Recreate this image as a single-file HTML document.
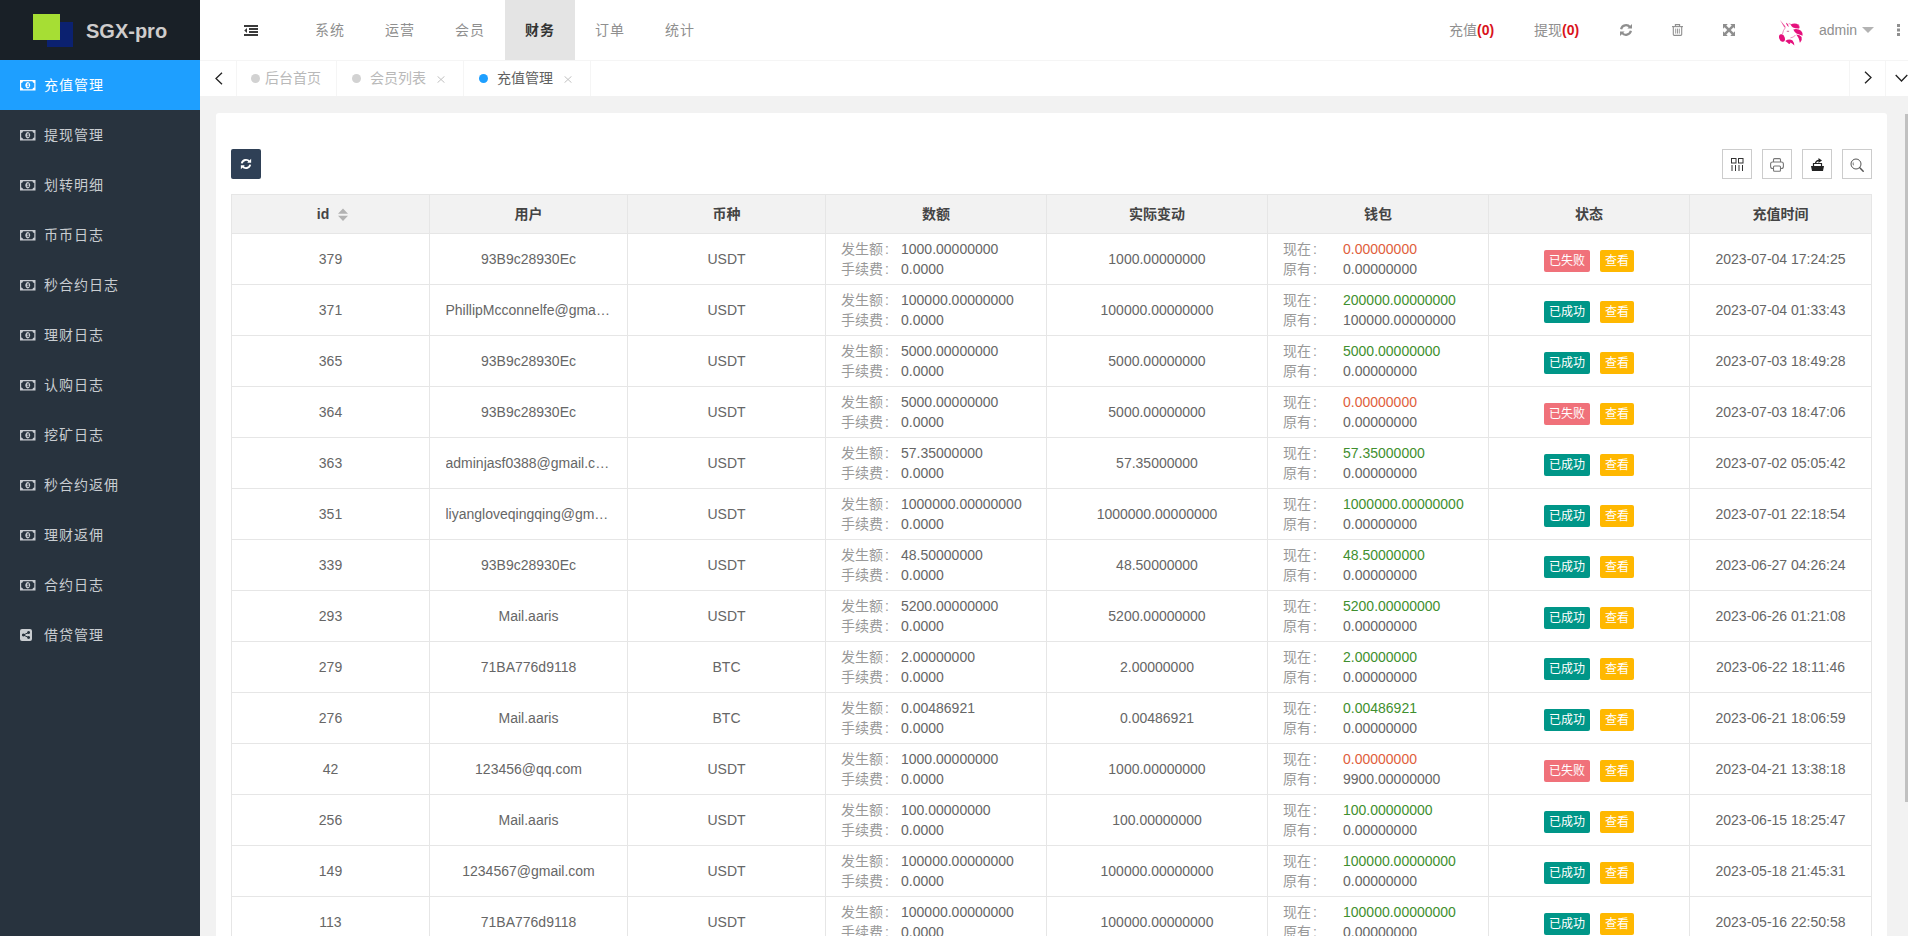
<!DOCTYPE html>
<html lang="zh-CN">
<head>
<meta charset="utf-8">
<title>SGX-pro</title>
<style>
*{box-sizing:border-box;margin:0;padding:0}
html,body{width:1908px;height:936px;overflow:hidden;background:#f2f2f2}
body{font-family:"Liberation Sans","Noto Sans CJK SC",sans-serif;font-size:14px;color:#666;position:relative}
svg{display:block}
.abs{position:absolute}
/* sidebar */
#side{position:absolute;left:0;top:0;width:200px;height:936px;background:#28333e}
#logo{position:absolute;left:0;top:0;width:200px;height:60px;background:#192027}
#logo .g{position:absolute;left:33px;top:14px;width:27px;height:26px;background:#a6de34}
#logo .b{position:absolute;left:47px;top:22px;width:26px;height:25px;background:#0b2170}
#logo h1{position:absolute;left:86px;top:1px;line-height:60px;font-size:20px;font-weight:bold;color:#cfcccc;white-space:nowrap}
.mi{position:absolute;left:0;width:200px;height:50px;line-height:50px;color:#c9cdd1;font-size:14px;white-space:nowrap;letter-spacing:1px}
.mi.on{background:#1e9fff;color:#fff}
.mi svg{position:absolute;left:20px;top:20px}
.mi span{position:absolute;left:44px;top:0}
/* header */
#head{position:absolute;left:200px;top:0;width:1708px;height:60px;background:#fff}
.nv{position:absolute;top:0;height:60px;width:70px;line-height:60px;text-align:center;color:#8f8f8f;font-size:14px;letter-spacing:1px}
.nv.on{background:#e4e4e4;color:#333;font-weight:bold}
.hr{position:absolute;top:0;height:60px;line-height:60px;color:#8f8f8f;font-size:14px;white-space:nowrap}
.hr b{color:#d9141c;font-weight:bold}
/* tab bar */
#tabs{position:absolute;left:200px;top:60px;width:1708px;height:36px;background:#fff;border-top:1px solid #f5f5f5}
.tb{position:absolute;top:0;height:35px;line-height:35px;border-right:1px solid #f5f5f5;font-size:14px;color:#b9b9b9;white-space:nowrap}
.tb i{position:absolute;top:13px;width:9px;height:9px;border-radius:50%;background:#d2d2d2}
.tb.on{color:#606060}
.tb.on i{background:#1e9fff}
/* card */
#card{position:absolute;left:216px;top:113px;width:1671px;height:900px;background:#fff;border-radius:3px 3px 0 0}
#rbtn{position:absolute;left:231px;top:149px;width:30px;height:30px;background:#2f4056;border-radius:2px}
.tool{position:absolute;top:149px;width:30px;height:30px;border:1px solid #ccc;background:#fff}
/* table */
#tbl{position:absolute;left:231px;top:194px;border-collapse:collapse;table-layout:fixed;width:1640px}
#tbl th,#tbl td{border:1px solid #e6e6e6;font-size:14px;text-align:center;white-space:nowrap;overflow:hidden;text-overflow:ellipsis;padding:0}
#tbl th{height:39px;background:#f2f2f2;color:#444;font-weight:bold;padding-bottom:2px}
#tbl td{height:51px;color:#666}
#tbl td.l{text-align:left;padding-left:15px;line-height:20px}
#tbl td.l em{font-style:normal;color:#999;display:inline-block;width:60px}
.gr{color:#3f8f2f}.rd{color:#e05e3c}
.bt{position:relative;top:2px;display:inline-block;height:22px;line-height:22px;padding:0 5px;font-size:12px;color:#fff;border-radius:2px;vertical-align:middle}
.bt+.bt{margin-left:10px}
.ok{background:#009688}.fail{background:#f0717a}.see{background:#ffb800}
#sb{position:absolute;left:1905px;top:114px;width:3px;height:688px;background:#c1c1c1}
#tbl td .u{width:166px;margin:0 auto;overflow:hidden;text-overflow:ellipsis;white-space:nowrap}
#tbl td.l em i{font-style:normal;margin-left:2px}
</style>
</head>
<body>
<div id="side">
 <div id="logo"><div class="b"></div><div class="g"></div><h1>SGX-pro</h1></div>
 <div class="mi on" style="top:60px"><svg width="15.5" height="10.5" viewBox="0 0 15.5 10.5"><path fill="currentColor" fill-rule="evenodd" d="M0 0H15.5V10.5H0Z M3 1.2H12.5A1.8 1.8 0 0 0 14.3 3V7.5A1.8 1.8 0 0 0 12.5 9.3H3A1.8 1.8 0 0 0 1.2 7.5V3A1.8 1.8 0 0 0 3 1.2Z M7.75 2.1a2.4 3.15 0 1 0 .001 0Z M7.1 3.9l.9-.6h.6v3.1h.7v.7H6.8v-.7h.8V4.4l-.5.3Z"/></svg><span>充值管理</span></div>
 <div class="mi" style="top:110px"><svg width="15.5" height="10.5" viewBox="0 0 15.5 10.5"><path fill="currentColor" fill-rule="evenodd" d="M0 0H15.5V10.5H0Z M3 1.2H12.5A1.8 1.8 0 0 0 14.3 3V7.5A1.8 1.8 0 0 0 12.5 9.3H3A1.8 1.8 0 0 0 1.2 7.5V3A1.8 1.8 0 0 0 3 1.2Z M7.75 2.1a2.4 3.15 0 1 0 .001 0Z M7.1 3.9l.9-.6h.6v3.1h.7v.7H6.8v-.7h.8V4.4l-.5.3Z"/></svg><span>提现管理</span></div>
 <div class="mi" style="top:160px"><svg width="15.5" height="10.5" viewBox="0 0 15.5 10.5"><path fill="currentColor" fill-rule="evenodd" d="M0 0H15.5V10.5H0Z M3 1.2H12.5A1.8 1.8 0 0 0 14.3 3V7.5A1.8 1.8 0 0 0 12.5 9.3H3A1.8 1.8 0 0 0 1.2 7.5V3A1.8 1.8 0 0 0 3 1.2Z M7.75 2.1a2.4 3.15 0 1 0 .001 0Z M7.1 3.9l.9-.6h.6v3.1h.7v.7H6.8v-.7h.8V4.4l-.5.3Z"/></svg><span>划转明细</span></div>
 <div class="mi" style="top:210px"><svg width="15.5" height="10.5" viewBox="0 0 15.5 10.5"><path fill="currentColor" fill-rule="evenodd" d="M0 0H15.5V10.5H0Z M3 1.2H12.5A1.8 1.8 0 0 0 14.3 3V7.5A1.8 1.8 0 0 0 12.5 9.3H3A1.8 1.8 0 0 0 1.2 7.5V3A1.8 1.8 0 0 0 3 1.2Z M7.75 2.1a2.4 3.15 0 1 0 .001 0Z M7.1 3.9l.9-.6h.6v3.1h.7v.7H6.8v-.7h.8V4.4l-.5.3Z"/></svg><span>币币日志</span></div>
 <div class="mi" style="top:260px"><svg width="15.5" height="10.5" viewBox="0 0 15.5 10.5"><path fill="currentColor" fill-rule="evenodd" d="M0 0H15.5V10.5H0Z M3 1.2H12.5A1.8 1.8 0 0 0 14.3 3V7.5A1.8 1.8 0 0 0 12.5 9.3H3A1.8 1.8 0 0 0 1.2 7.5V3A1.8 1.8 0 0 0 3 1.2Z M7.75 2.1a2.4 3.15 0 1 0 .001 0Z M7.1 3.9l.9-.6h.6v3.1h.7v.7H6.8v-.7h.8V4.4l-.5.3Z"/></svg><span>秒合约日志</span></div>
 <div class="mi" style="top:310px"><svg width="15.5" height="10.5" viewBox="0 0 15.5 10.5"><path fill="currentColor" fill-rule="evenodd" d="M0 0H15.5V10.5H0Z M3 1.2H12.5A1.8 1.8 0 0 0 14.3 3V7.5A1.8 1.8 0 0 0 12.5 9.3H3A1.8 1.8 0 0 0 1.2 7.5V3A1.8 1.8 0 0 0 3 1.2Z M7.75 2.1a2.4 3.15 0 1 0 .001 0Z M7.1 3.9l.9-.6h.6v3.1h.7v.7H6.8v-.7h.8V4.4l-.5.3Z"/></svg><span>理财日志</span></div>
 <div class="mi" style="top:360px"><svg width="15.5" height="10.5" viewBox="0 0 15.5 10.5"><path fill="currentColor" fill-rule="evenodd" d="M0 0H15.5V10.5H0Z M3 1.2H12.5A1.8 1.8 0 0 0 14.3 3V7.5A1.8 1.8 0 0 0 12.5 9.3H3A1.8 1.8 0 0 0 1.2 7.5V3A1.8 1.8 0 0 0 3 1.2Z M7.75 2.1a2.4 3.15 0 1 0 .001 0Z M7.1 3.9l.9-.6h.6v3.1h.7v.7H6.8v-.7h.8V4.4l-.5.3Z"/></svg><span>认购日志</span></div>
 <div class="mi" style="top:410px"><svg width="15.5" height="10.5" viewBox="0 0 15.5 10.5"><path fill="currentColor" fill-rule="evenodd" d="M0 0H15.5V10.5H0Z M3 1.2H12.5A1.8 1.8 0 0 0 14.3 3V7.5A1.8 1.8 0 0 0 12.5 9.3H3A1.8 1.8 0 0 0 1.2 7.5V3A1.8 1.8 0 0 0 3 1.2Z M7.75 2.1a2.4 3.15 0 1 0 .001 0Z M7.1 3.9l.9-.6h.6v3.1h.7v.7H6.8v-.7h.8V4.4l-.5.3Z"/></svg><span>挖矿日志</span></div>
 <div class="mi" style="top:460px"><svg width="15.5" height="10.5" viewBox="0 0 15.5 10.5"><path fill="currentColor" fill-rule="evenodd" d="M0 0H15.5V10.5H0Z M3 1.2H12.5A1.8 1.8 0 0 0 14.3 3V7.5A1.8 1.8 0 0 0 12.5 9.3H3A1.8 1.8 0 0 0 1.2 7.5V3A1.8 1.8 0 0 0 3 1.2Z M7.75 2.1a2.4 3.15 0 1 0 .001 0Z M7.1 3.9l.9-.6h.6v3.1h.7v.7H6.8v-.7h.8V4.4l-.5.3Z"/></svg><span>秒合约返佣</span></div>
 <div class="mi" style="top:510px"><svg width="15.5" height="10.5" viewBox="0 0 15.5 10.5"><path fill="currentColor" fill-rule="evenodd" d="M0 0H15.5V10.5H0Z M3 1.2H12.5A1.8 1.8 0 0 0 14.3 3V7.5A1.8 1.8 0 0 0 12.5 9.3H3A1.8 1.8 0 0 0 1.2 7.5V3A1.8 1.8 0 0 0 3 1.2Z M7.75 2.1a2.4 3.15 0 1 0 .001 0Z M7.1 3.9l.9-.6h.6v3.1h.7v.7H6.8v-.7h.8V4.4l-.5.3Z"/></svg><span>理财返佣</span></div>
 <div class="mi" style="top:560px"><svg width="15.5" height="10.5" viewBox="0 0 15.5 10.5"><path fill="currentColor" fill-rule="evenodd" d="M0 0H15.5V10.5H0Z M3 1.2H12.5A1.8 1.8 0 0 0 14.3 3V7.5A1.8 1.8 0 0 0 12.5 9.3H3A1.8 1.8 0 0 0 1.2 7.5V3A1.8 1.8 0 0 0 3 1.2Z M7.75 2.1a2.4 3.15 0 1 0 .001 0Z M7.1 3.9l.9-.6h.6v3.1h.7v.7H6.8v-.7h.8V4.4l-.5.3Z"/></svg><span>合约日志</span></div>
 <div class="mi" style="top:610px"><svg style="top:19px" width="12" height="12" viewBox="0 0 12 12"><path fill="currentColor" fill-rule="evenodd" d="M2 0H10A2 2 0 0 1 12 2V10A2 2 0 0 1 10 12H2A2 2 0 0 1 0 10V2A2 2 0 0 1 2 0Z M8.6 2a1.5 1.5 0 1 0 .001 0Z M3.4 4.5a1.5 1.5 0 1 0 .001 0Z M8.6 7a1.5 1.5 0 1 0 .001 0Z"/><path stroke="currentColor" stroke-width="0" d=""/><path fill="none" stroke="#28333e" stroke-width="1" d="M8.6 3.5L3.4 6L8.6 8.5"/></svg><span>借贷管理</span></div>
</div>
<div id="head">
<svg class="abs" style="left:44px;top:25px" width="14" height="11" viewBox="0 0 14 11"><path fill="#3a3a3a" d="M0 0H14V2H0Z M5 3H14V5H5Z M5 6H14V8H5Z M0 9H14V11H0Z M3 3V8L0.2 5.5Z"/></svg>
 <div class="nv" style="left:95px">系统</div>
 <div class="nv" style="left:165px">运营</div>
 <div class="nv" style="left:235px">会员</div>
 <div class="nv on" style="left:305px">财务</div>
 <div class="nv" style="left:375px">订单</div>
 <div class="nv" style="left:445px">统计</div>
 <div class="hr" style="left:1249px">充值<b>(0)</b></div>
 <div class="hr" style="left:1334px">提现<b>(0)</b></div>
 <div class="abs" style="left:1419px;top:23px"><svg width="14" height="14" viewBox="0 0 14 14"><g fill="none" stroke="#8f8f8f" stroke-width="2.2"><path d="M2.1 6.2A5 5 0 0 1 11 4.2"/><path d="M11.9 7.8A5 5 0 0 1 3 9.8"/></g><path fill="#8f8f8f" d="M13 1V5.6H8.4Z M1 13V8.4H5.6Z"/></svg></div>
 <svg class="abs" style="left:1472px;top:24px" width="11" height="12" viewBox="0 0 11 12"><g fill="none" stroke="#8f8f8f" stroke-width="1.1"><path d="M0 2.6H11"/><path d="M3.4 2.6V0.6H7.6V2.6"/><path d="M1.3 2.6V10.5Q1.3 11.4 2.2 11.4H8.8Q9.7 11.4 9.7 10.5V2.6"/><path d="M3.7 4.6V9.6M5.5 4.6V9.6M7.3 4.6V9.6" stroke-width="0.9"/></g></svg>
 <svg class="abs" style="left:1523px;top:24px" width="12" height="12" viewBox="0 0 12 12"><path fill="#8f8f8f" d="M0 0H4.8L3.3 1.5L6 4.2L8.7 1.5L7.2 0H12V4.8L10.5 3.3L7.8 6L10.5 8.7L12 7.2V12H7.2L8.7 10.5L6 7.8L3.3 10.5L4.8 12H0V7.2L1.5 8.7L4.2 6L1.5 3.3L0 4.8Z"/></svg>
 <svg class="abs" style="left:1570px;top:12px" width="42" height="42" viewBox="0 0 42 42"><g fill="#e5107c"><path d="M10 8L15.5 14.6L14.5 15.7Z" fill="#ea4f9b"/><path d="M16 10.8Q18.2 11.5 18.7 15.2Q16.6 14 16 10.8Z"/><path d="M20.5 12.6Q25 10.4 28.5 12.8Q29.8 14.5 29.2 16.6Q25.5 16.7 23 15.6Q21.5 14.6 20.5 12.6Z"/><path d="M23.3 17.4Q28 16.4 31 18.8Q33.2 21 32.6 23.8Q29 22.6 26.5 21.6Q24.4 20 23.3 17.4Z"/><path d="M26.3 22.6Q30 23 31.6 25Q32.6 28 30 30.8Q29.4 30 29.5 29Q28.6 25.5 26.3 22.6Z"/><ellipse cx="12" cy="26" rx="2.8" ry="3.9" transform="rotate(-18 12 26)"/><path d="M15.2 29Q19 26.4 22.6 28.4Q24.2 30.5 24.4 33.6Q22 31 20.2 30.6Q20.6 32.2 19 32Q17.5 30.4 15.2 29Z"/></g><g fill="none" stroke="#ea5fa3" stroke-width="0.7"><path d="M15.6 15.4Q13 18 12.4 22.2"/><path d="M18.5 12Q20 11 21 12.6"/><path d="M20.5 25.8Q24 25.6 25.4 23"/><path d="M28.5 12L29.5 16" stroke-width="0.5"/></g><path fill="none" stroke="#c23d7c" stroke-width="0.8" d="M16.8 19.3H19.1"/></svg>
 <div class="hr" style="left:1619px">admin</div>
 <svg class="abs" style="left:1662px;top:27px" width="12" height="6" viewBox="0 0 12 6"><path fill="#b3b3b3" d="M0 0H12L6 6Z"/></svg>
 <svg class="abs" style="left:1697px;top:24px" width="3" height="12" viewBox="0 0 3 12"><path fill="#8f8f8f" d="M0 0H3V3H0ZM0 4.5H3V7.5H0ZM0 9H3V12H0Z"/></svg>
</div>
<div id="tabs">
 <div class="tb" style="left:0;width:37px"><svg class="abs" style="left:15px;top:11px" width="8" height="13" viewBox="0 0 8 13"><path fill="none" stroke="#222" stroke-width="1.3" d="M7 0.7L1 6.5L7 12.3"/></svg></div>
 <div class="tb" style="left:37px;width:100px"><i style="left:14px"></i><span class="abs" style="left:28px">后台首页</span></div>
 <div class="tb" style="left:137px;width:127px"><i style="left:15px"></i><span class="abs" style="left:33px">会员列表</span><svg class="abs" style="top:15px;left:100px" width="8" height="7" viewBox="0 0 8 7"><path fill="none" stroke="#c2c2c2" stroke-width="1" d="M0.5 0.3L7.5 6.7M7.5 0.3L0.5 6.7"/></svg></div>
 <div class="tb on" style="left:264px;width:127px"><i style="left:15px"></i><span class="abs" style="left:33px">充值管理</span><svg class="abs" style="top:15px;left:100px" width="8" height="7" viewBox="0 0 8 7"><path fill="none" stroke="#c2c2c2" stroke-width="1" d="M0.5 0.3L7.5 6.7M7.5 0.3L0.5 6.7"/></svg></div>
 <div class="tb" style="left:1649px;width:37px;border-left:1px solid #f5f5f5"><svg class="abs" style="left:14px;top:10px" width="8" height="13" viewBox="0 0 8 13"><path fill="none" stroke="#222" stroke-width="1.3" d="M1 0.7L7 6.5L1 12.3"/></svg></div>
 <svg class="abs" style="left:1695px;top:13px" width="13" height="8" viewBox="0 0 13 8"><path fill="none" stroke="#222" stroke-width="1.3" d="M0.7 1L6.5 7L12.3 1"/></svg>
</div>
<div id="card"></div>
<div id="rbtn"><div class="abs" style="left:9px;top:9px"><svg width="12" height="12" viewBox="0 0 14 14"><g fill="none" stroke="#fff" stroke-width="2.2"><path d="M2.1 6.2A5 5 0 0 1 11 4.2"/><path d="M11.9 7.8A5 5 0 0 1 3 9.8"/></g><path fill="#fff" d="M13 1V5.6H8.4Z M1 13V8.4H5.6Z"/></svg></div></div>
<div class="tool" style="left:1722px"><svg class="abs" style="left:8px;top:8px" width="13" height="13" viewBox="0 0 13 13"><g fill="none" stroke="#333" stroke-width="1"><rect x="0.5" y="0.5" width="4.5" height="4.5"/><rect x="7.5" y="0.5" width="4.5" height="4.5"/><path d="M1 7V13M4.5 7V13M8 7V13M11.5 7V13"/></g></svg></div>
<div class="tool" style="left:1762px"><svg class="abs" style="left:7px;top:8px" width="14" height="14" viewBox="0 0 14 14"><g fill="none" stroke="#777" stroke-width="1.1"><path d="M3.5 4V1.6Q3.5 0.6 4.5 0.6H9.5Q10.5 0.6 10.5 1.6V4"/><rect x="0.6" y="4" width="12.8" height="6.5" rx="2"/><rect x="3.5" y="8" width="7" height="5.3" rx="1" fill="#fff"/></g></svg></div>
<div class="tool" style="left:1802px"><svg class="abs" style="left:8px;top:8px" width="13" height="14" viewBox="0 0 13 14"><path fill="#222" d="M0 8H13L12 13H1Z"/><path fill="none" stroke="#222" stroke-width="1.2" d="M2.5 8V5.5H10.5V8"/><path fill="none" stroke="#222" stroke-width="1.3" d="M4.5 6Q4.5 2.5 8 2.5"/><path fill="#222" d="M7.5 0L11 2.5L7.5 5Z"/></svg></div>
<div class="tool" style="left:1842px"><svg class="abs" style="left:7px;top:8px" width="15" height="15" viewBox="0 0 15 15"><g fill="none" stroke="#555"><circle cx="6" cy="6" r="5" stroke-width="1"/><path d="M9.8 9.8L13.2 13.2" stroke-width="1.5" stroke-linecap="round"/><path d="M3.3 4.5Q2.8 6 3.5 7.3" stroke-width="0.8"/></g></svg></div>
<table id="tbl">
<colgroup><col style="width:198px"><col style="width:198px"><col style="width:198px"><col style="width:221px"><col style="width:221px"><col style="width:221px"><col style="width:201px"><col style="width:182px"></colgroup>
<tr><th style="padding-left:4px"><span style="position:relative;top:1px">id</span><svg style="display:inline-block;margin-left:9px;vertical-align:-3px" width="10" height="13" viewBox="0 0 10 13"><path fill="#b2b2b2" d="M5 0.5L10 5.7H0ZM5 12.9L0 7.7H10Z"/></svg></th><th>用户</th><th>币种</th><th>数额</th><th>实际变动</th><th>钱包</th><th>状态</th><th>充值时间</th></tr>
<tr><td>379</td><td><div class="u">93B9c28930Ec</div></td><td>USDT</td><td class="l"><em>发生额<i>:</i></em>1000.00000000<br><em>手续费<i>:</i></em>0.0000</td><td>1000.00000000</td><td class="l"><em>现在<i>:</i></em><span class="rd">0.00000000</span><br><em>原有<i>:</i></em>0.00000000</td><td><span class="bt fail">已失败</span><span class="bt see">查看</span></td><td>2023-07-04 17:24:25</td></tr>
<tr><td>371</td><td><div class="u">PhillipMcconnelfe@gmail.com</div></td><td>USDT</td><td class="l"><em>发生额<i>:</i></em>100000.00000000<br><em>手续费<i>:</i></em>0.0000</td><td>100000.00000000</td><td class="l"><em>现在<i>:</i></em><span class="gr">200000.00000000</span><br><em>原有<i>:</i></em>100000.00000000</td><td><span class="bt ok">已成功</span><span class="bt see">查看</span></td><td>2023-07-04 01:33:43</td></tr>
<tr><td>365</td><td><div class="u">93B9c28930Ec</div></td><td>USDT</td><td class="l"><em>发生额<i>:</i></em>5000.00000000<br><em>手续费<i>:</i></em>0.0000</td><td>5000.00000000</td><td class="l"><em>现在<i>:</i></em><span class="gr">5000.00000000</span><br><em>原有<i>:</i></em>0.00000000</td><td><span class="bt ok">已成功</span><span class="bt see">查看</span></td><td>2023-07-03 18:49:28</td></tr>
<tr><td>364</td><td><div class="u">93B9c28930Ec</div></td><td>USDT</td><td class="l"><em>发生额<i>:</i></em>5000.00000000<br><em>手续费<i>:</i></em>0.0000</td><td>5000.00000000</td><td class="l"><em>现在<i>:</i></em><span class="rd">0.00000000</span><br><em>原有<i>:</i></em>0.00000000</td><td><span class="bt fail">已失败</span><span class="bt see">查看</span></td><td>2023-07-03 18:47:06</td></tr>
<tr><td>363</td><td><div class="u">adminjasf0388@gmail.com</div></td><td>USDT</td><td class="l"><em>发生额<i>:</i></em>57.35000000<br><em>手续费<i>:</i></em>0.0000</td><td>57.35000000</td><td class="l"><em>现在<i>:</i></em><span class="gr">57.35000000</span><br><em>原有<i>:</i></em>0.00000000</td><td><span class="bt ok">已成功</span><span class="bt see">查看</span></td><td>2023-07-02 05:05:42</td></tr>
<tr><td>351</td><td><div class="u">liyangloveqingqing@gmail.com</div></td><td>USDT</td><td class="l"><em>发生额<i>:</i></em>1000000.00000000<br><em>手续费<i>:</i></em>0.0000</td><td>1000000.00000000</td><td class="l"><em>现在<i>:</i></em><span class="gr">1000000.00000000</span><br><em>原有<i>:</i></em>0.00000000</td><td><span class="bt ok">已成功</span><span class="bt see">查看</span></td><td>2023-07-01 22:18:54</td></tr>
<tr><td>339</td><td><div class="u">93B9c28930Ec</div></td><td>USDT</td><td class="l"><em>发生额<i>:</i></em>48.50000000<br><em>手续费<i>:</i></em>0.0000</td><td>48.50000000</td><td class="l"><em>现在<i>:</i></em><span class="gr">48.50000000</span><br><em>原有<i>:</i></em>0.00000000</td><td><span class="bt ok">已成功</span><span class="bt see">查看</span></td><td>2023-06-27 04:26:24</td></tr>
<tr><td>293</td><td><div class="u">Mail.aaris</div></td><td>USDT</td><td class="l"><em>发生额<i>:</i></em>5200.00000000<br><em>手续费<i>:</i></em>0.0000</td><td>5200.00000000</td><td class="l"><em>现在<i>:</i></em><span class="gr">5200.00000000</span><br><em>原有<i>:</i></em>0.00000000</td><td><span class="bt ok">已成功</span><span class="bt see">查看</span></td><td>2023-06-26 01:21:08</td></tr>
<tr><td>279</td><td><div class="u">71BA776d9118</div></td><td>BTC</td><td class="l"><em>发生额<i>:</i></em>2.00000000<br><em>手续费<i>:</i></em>0.0000</td><td>2.00000000</td><td class="l"><em>现在<i>:</i></em><span class="gr">2.00000000</span><br><em>原有<i>:</i></em>0.00000000</td><td><span class="bt ok">已成功</span><span class="bt see">查看</span></td><td>2023-06-22 18:11:46</td></tr>
<tr><td>276</td><td><div class="u">Mail.aaris</div></td><td>BTC</td><td class="l"><em>发生额<i>:</i></em>0.00486921<br><em>手续费<i>:</i></em>0.0000</td><td>0.00486921</td><td class="l"><em>现在<i>:</i></em><span class="gr">0.00486921</span><br><em>原有<i>:</i></em>0.00000000</td><td><span class="bt ok">已成功</span><span class="bt see">查看</span></td><td>2023-06-21 18:06:59</td></tr>
<tr><td>42</td><td><div class="u">123456@qq.com</div></td><td>USDT</td><td class="l"><em>发生额<i>:</i></em>1000.00000000<br><em>手续费<i>:</i></em>0.0000</td><td>1000.00000000</td><td class="l"><em>现在<i>:</i></em><span class="rd">0.00000000</span><br><em>原有<i>:</i></em>9900.00000000</td><td><span class="bt fail">已失败</span><span class="bt see">查看</span></td><td>2023-04-21 13:38:18</td></tr>
<tr><td>256</td><td><div class="u">Mail.aaris</div></td><td>USDT</td><td class="l"><em>发生额<i>:</i></em>100.00000000<br><em>手续费<i>:</i></em>0.0000</td><td>100.00000000</td><td class="l"><em>现在<i>:</i></em><span class="gr">100.00000000</span><br><em>原有<i>:</i></em>0.00000000</td><td><span class="bt ok">已成功</span><span class="bt see">查看</span></td><td>2023-06-15 18:25:47</td></tr>
<tr><td>149</td><td><div class="u">1234567@gmail.com</div></td><td>USDT</td><td class="l"><em>发生额<i>:</i></em>100000.00000000<br><em>手续费<i>:</i></em>0.0000</td><td>100000.00000000</td><td class="l"><em>现在<i>:</i></em><span class="gr">100000.00000000</span><br><em>原有<i>:</i></em>0.00000000</td><td><span class="bt ok">已成功</span><span class="bt see">查看</span></td><td>2023-05-18 21:45:31</td></tr>
<tr><td>113</td><td><div class="u">71BA776d9118</div></td><td>USDT</td><td class="l"><em>发生额<i>:</i></em>100000.00000000<br><em>手续费<i>:</i></em>0.0000</td><td>100000.00000000</td><td class="l"><em>现在<i>:</i></em><span class="gr">100000.00000000</span><br><em>原有<i>:</i></em>0.00000000</td><td><span class="bt ok">已成功</span><span class="bt see">查看</span></td><td>2023-05-16 22:50:58</td></tr>
</table>
<div id="sb"></div>
</body>
</html>
